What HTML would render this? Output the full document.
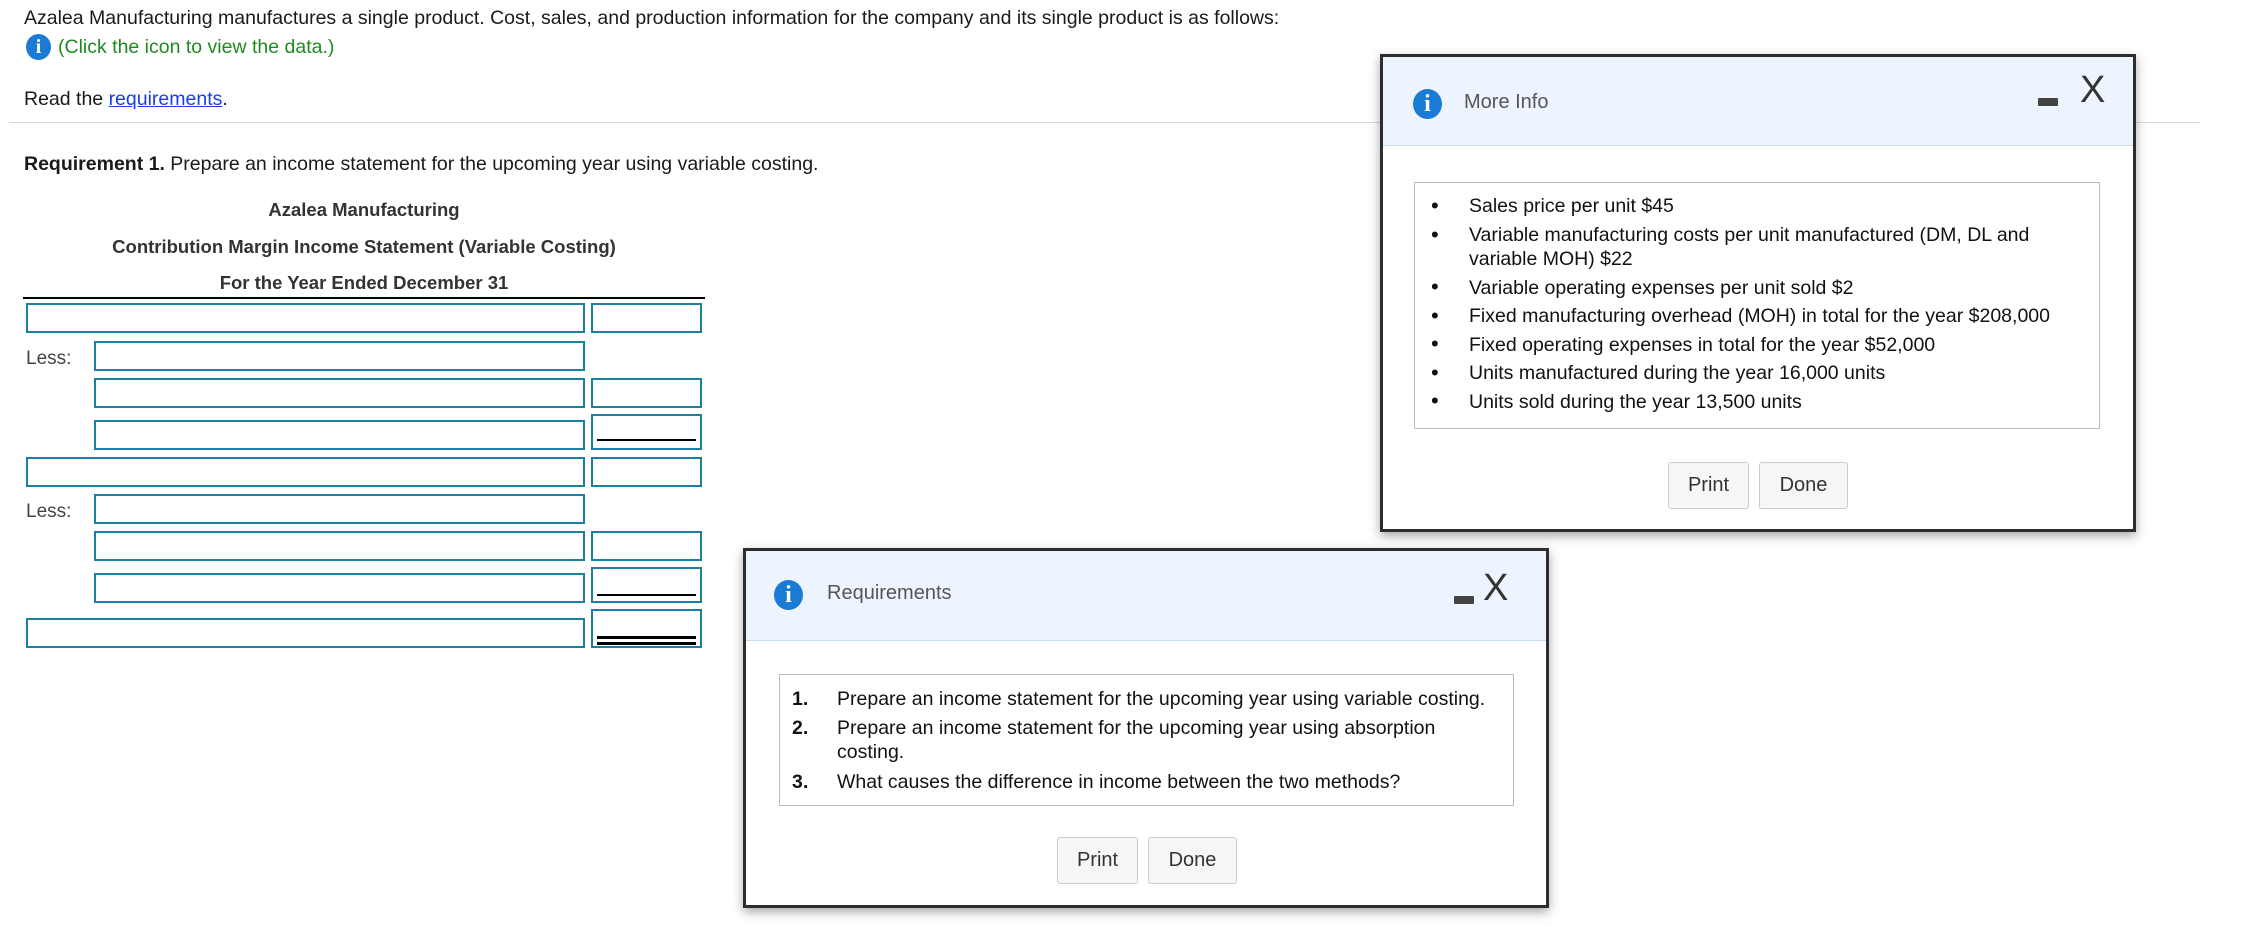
<!DOCTYPE html>
<html><head><meta charset="utf-8"><style>
*{box-sizing:border-box;margin:0;padding:0}
body{width:2244px;height:926px;overflow:hidden;background:#fff;font-family:"Liberation Sans",Arial,sans-serif;color:#1a1a1a;position:relative;font-size:19.5px}
.a{position:absolute;white-space:nowrap}
.icon{position:absolute;border-radius:50%;background:#1a7bd4;color:#fff;font-family:"Liberation Serif",serif;font-weight:bold;text-align:center}
.inp{position:absolute;border:2px solid #1a7fa0;background:#fff}
.ul{position:absolute;left:4px;right:4px;border-top:2px solid #000}
.dlg{position:absolute;background:#fff;border:3px solid #2d2d2d;box-shadow:0 4px 10px rgba(0,0,0,.35)}
.hdr{position:absolute;left:0;top:0;right:0;background:#eef4fd;border-bottom:1px solid #c7dcf3}
.btn{position:absolute;border:1px solid #ccc;border-radius:3px;background:#f6f6f6;color:#333;font-size:20px;text-align:center}
.box{position:absolute;border:1px solid #bbb}
.hd{font-weight:bold;color:#333;font-size:18.5px}
.bl{font-size:22px;line-height:28.5px}
</style></head><body>
<div class="a" style="left:24px;top:7px">Azalea Manufacturing manufactures a single product. Cost, sales, and production information for the company and its single product is as follows:</div>
<div class="icon" style="left:26px;top:34px;width:25px;height:26px;font-size:20px;line-height:26px">i</div>
<div class="a" style="left:58px;top:36px;color:#1f8a1f">(Click the icon to view the data.)</div>
<div class="a" style="left:24px;top:88px">Read the <span style="color:#1a3cf0;text-decoration:underline">requirements</span>.</div>
<div style="position:absolute;left:9px;top:122px;width:2191px;border-top:1px solid #d4d8e0"></div>
<div class="a" style="left:24px;top:153px"><b>Requirement 1.</b> Prepare an income statement for the upcoming year using variable costing.</div>
<div class="a hd" style="left:0;width:728px;text-align:center;top:199px">Azalea Manufacturing</div>
<div class="a hd" style="left:0;width:728px;text-align:center;top:236px">Contribution Margin Income Statement (Variable Costing)</div>
<div class="a hd" style="left:0;width:728px;text-align:center;top:272px">For the Year Ended December 31</div>
<div style="position:absolute;left:23px;top:297px;width:682px;height:2px;background:#000"></div>

<div class="inp" style="left:26px;top:303px;width:559px;height:30px"></div>
<div class="inp" style="left:591px;top:303px;width:111px;height:30px"></div>
<div class="a" style="left:26px;top:348px;color:#444;font-size:19px">Less:</div>
<div class="inp" style="left:94px;top:341px;width:491px;height:30px"></div>
<div class="inp" style="left:94px;top:378px;width:491px;height:30px"></div>
<div class="inp" style="left:591px;top:378px;width:111px;height:30px"></div>
<div class="inp" style="left:94px;top:420px;width:491px;height:30px"></div>
<div class="inp" style="left:591px;top:414px;width:111px;height:36px"><div class="ul" style="top:23px"></div></div>
<div class="inp" style="left:26px;top:457px;width:559px;height:30px"></div>
<div class="inp" style="left:591px;top:457px;width:111px;height:30px"></div>
<div class="a" style="left:26px;top:501px;color:#444;font-size:19px">Less:</div>
<div class="inp" style="left:94px;top:494px;width:491px;height:30px"></div>
<div class="inp" style="left:94px;top:531px;width:491px;height:30px"></div>
<div class="inp" style="left:591px;top:531px;width:111px;height:30px"></div>
<div class="inp" style="left:94px;top:573px;width:491px;height:30px"></div>
<div class="inp" style="left:591px;top:567px;width:111px;height:36px"><div class="ul" style="top:25px"></div></div>
<div class="inp" style="left:26px;top:618px;width:559px;height:30px"></div>
<div class="inp" style="left:591px;top:609px;width:111px;height:39px"><div class="ul" style="top:25px;border-top:3px solid #000"></div><div class="ul" style="top:31px;border-top:3px solid #000"></div></div>

<!-- More Info dialog -->
<div class="dlg" style="left:1380px;top:54px;width:756px;height:478px">
 <div class="hdr" style="height:89px"></div>
 <div class="icon" style="left:30px;top:32px;width:29px;height:30px;font-size:24px;line-height:30px">i</div>
 <div class="a" style="left:81px;top:34px;color:#555;font-size:20px">More Info</div>
 <div style="position:absolute;left:655px;top:41px;width:20px;height:8px;background:#444;border-radius:1px"></div>
 <div class="a" style="left:697px;top:12px;font-size:38px;color:#333">X</div>
 <div class="box" style="left:31px;top:125px;width:686px;height:247px"></div>
 <div class="a" style="left:48px;top:135px;color:#111">
  <div class="bl">•</div><div class="bl">•</div><div style="height:24px"></div><div class="bl">•</div><div class="bl">•</div><div class="bl">•</div><div class="bl">•</div><div class="bl">•</div>
 </div>
 <div class="a" style="left:86px;top:135px;line-height:28.5px;color:#111">
  <div>Sales price per unit $45</div>
  <div style="line-height:24px;padding-top:2px;padding-bottom:3px">Variable manufacturing costs per unit manufactured (DM, DL and<br>variable MOH) $22</div>
  <div>Variable operating expenses per unit sold $2</div>
  <div>Fixed manufacturing overhead (MOH) in total for the year $208,000</div>
  <div>Fixed operating expenses in total for the year $52,000</div>
  <div>Units manufactured during the year 16,000 units</div>
  <div>Units sold during the year 13,500 units</div>
 </div>
 <div class="btn" style="left:285px;top:405px;width:81px;height:47px;line-height:45px">Print</div>
 <div class="btn" style="left:376px;top:405px;width:89px;height:47px;line-height:45px">Done</div>
</div>

<!-- Requirements dialog -->
<div class="dlg" style="left:743px;top:548px;width:806px;height:360px">
 <div class="hdr" style="height:90px"></div>
 <div class="icon" style="left:28px;top:29px;width:29px;height:30px;font-size:24px;line-height:30px">i</div>
 <div class="a" style="left:81px;top:31px;color:#555;font-size:20px">Requirements</div>
 <div style="position:absolute;left:708px;top:45px;width:20px;height:8px;background:#444;border-radius:1px"></div>
 <div class="a" style="left:737px;top:16px;font-size:38px;color:#333">X</div>
 <div class="box" style="left:33px;top:123px;width:735px;height:132px"></div>
 <div class="a" style="left:46px;top:134px;color:#111;line-height:28.5px">
  <div><b style="display:inline-block;width:45px">1.</b>Prepare an income statement for the upcoming year using variable costing.</div>
  <div style="display:flex;line-height:24px;padding-top:2px;padding-bottom:4px"><b style="display:inline-block;width:45px">2.</b><span>Prepare an income statement for the upcoming year using absorption<br>costing.</span></div>
  <div><b style="display:inline-block;width:45px">3.</b>What causes the difference in income between the two methods?</div>
 </div>
 <div class="btn" style="left:311px;top:286px;height:47px;line-height:45px;width:81px">Print</div>
 <div class="btn" style="left:402px;top:286px;width:89px;height:47px;line-height:45px">Done</div>
</div>
</body></html>
